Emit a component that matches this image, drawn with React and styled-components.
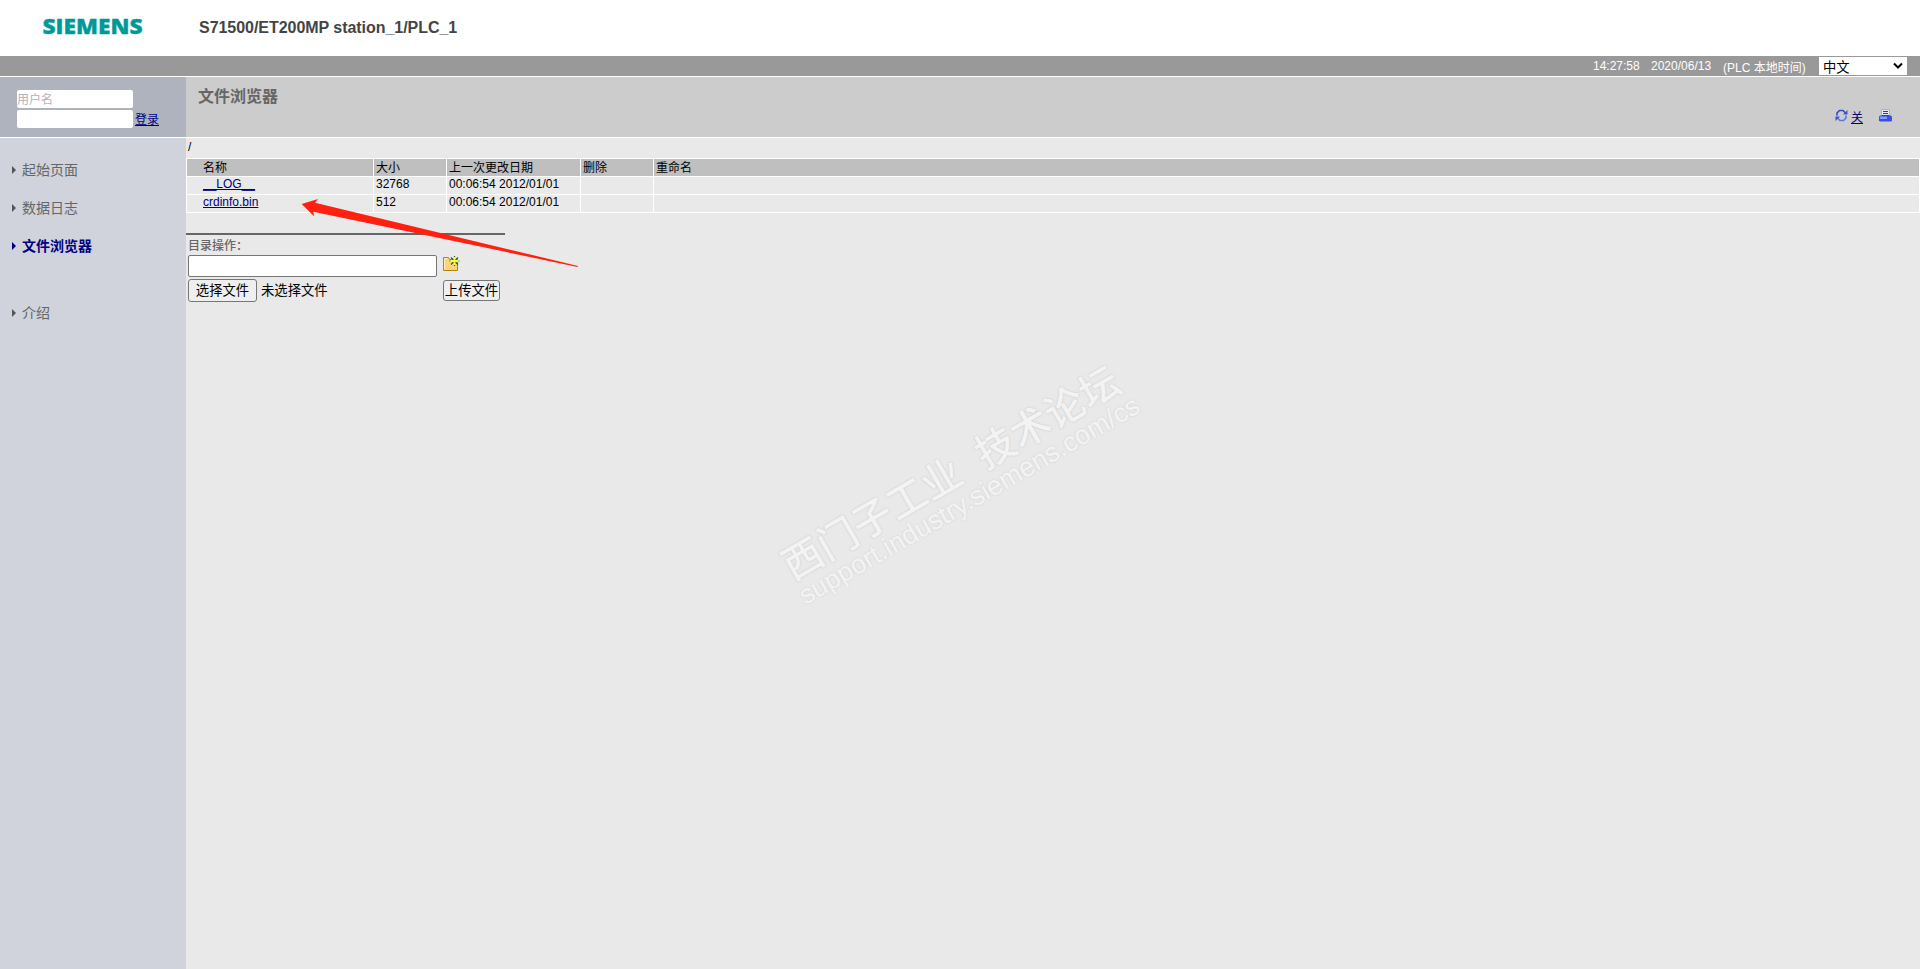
import styled, { createGlobalStyle } from "styled-components";

const GlobalStyle = createGlobalStyle`
  * {
    box-sizing: border-box;
  }

  body {
    margin: 0;
    background: #e9e9e9;
    color: #000;
    font-family: "Liberation Sans", "Noto Sans CJK SC", sans-serif;
    font-size: 12px;
    overflow: hidden;
  }
`;

const Page = styled.div`
  position: relative;
  height: 100vh;
  display: flex;
  flex-direction: column;
  overflow: hidden;
`;

const Header = styled.header`
  height: 56px;
  display: flex;
  background: #fff;
`;

const LogoBox = styled.div`
  width: 199px;
  padding: 10px 0 0 42px;

  svg {
    display: block;
  }
`;

const StationName = styled.h1`
  margin: 0;
  padding-top: 19px;
  font-size: 16px;
  letter-spacing: -0.04px;
  line-height: 18px;
  color: #444;
`;

const StatusBar = styled.div`
  height: 21px;
  display: flex;
  justify-content: flex-end;
  padding-right: 13px;
  background: #999;
  border-bottom: 1px solid #fff;
  color: #fff;
`;

const StatusText = styled.span`
  width: ${(props) => props.$width}px;
  padding-top: ${(props) => props.$top || 3}px;
  line-height: 14px;
  white-space: nowrap;
`;

const LanguageSelect = styled.button`
  width: 88px;
  height: 18px;
  margin-top: 1px;
  padding: 0 4px 0 4px;
  display: flex;
  align-items: center;
  justify-content: space-between;
  border: 0;
  background: #fff;
  color: #000;
  font: inherit;
  font-size: 13.33px;
  line-height: 18px;

  span {
    padding-top: 3px;
  }
`;

const Body = styled.div`
  flex: 1;
  display: flex;
`;

const Sidebar = styled.aside`
  width: 186px;
  background: #d0d3db;
`;

const LoginBox = styled.form`
  height: 61px;
  padding: 13px 0 0 17px;
  display: flex;
  flex-direction: column;
  gap: 2px;
  background: #afb3be;
  border-bottom: 1px solid #fff;
`;

const LoginRow = styled.div`
  display: flex;
  gap: 2px;
  height: 18px;
`;

const LoginInput = styled.input`
  width: 116px;
  height: 18px;
  padding: 1px 0 0;
  border: 0;
  border-radius: 2px;
  background: #fff;
  font: inherit;

  &::placeholder {
    color: #afb3be;
    opacity: 1;
  }
`;

const Link = styled.a`
  color: #000080;
  text-decoration: underline;
  text-underline-offset: 1px;
  text-decoration-skip-ink: none;
`;

const LoginLink = styled(Link)`
  line-height: 20px;
`;

const Menu = styled.nav`
  padding-top: 12px;
`;

const MenuItem = styled.a`
  height: 38px;
  margin-bottom: ${(props) => (props.$spaced ? 29 : 0)}px;
  padding-left: 12px;
  display: flex;
  align-items: center;
  gap: 6px;
  color: ${(props) => (props.$active ? "#000080" : "#666")};
  font-size: 14px;
  font-weight: ${(props) => (props.$active ? "bold" : "normal")};

  &::before {
    content: "";
    margin-top: 2px;
    border-left: 4px solid ${(props) => (props.$active ? "#000080" : "#555")};
    border-top: 4px solid transparent;
    border-bottom: 4px solid transparent;
  }
`;

const Main = styled.main`
  flex: 1;
`;

const TitleBar = styled.div`
  height: 61px;
  padding: 8px 28px 0 12px;
  display: flex;
  justify-content: space-between;
  background: #ccc;
  border-bottom: 1px solid #fff;
`;

const Title = styled.h2`
  margin: 0;
  color: #666;
  font-size: 16px;
  line-height: 24px;
`;

const Tools = styled.div`
  padding-top: 22px;
  display: flex;

  svg {
    margin-top: 2px;
  }
`;

const RefreshLink = styled(Link)`
  margin: 0 16px 0 3px;
  line-height: 23px;
`;

const Path = styled.div`
  height: 20px;
  padding-left: 2px;
  line-height: 19px;
`;

const FileTable = styled.div`
  border-left: 1px solid #fff;
  border-top: 1px solid #fff;
`;

const Row = styled.div`
  display: grid;
  grid-template-columns: 187px 73px 134px 73px 1fr;
  height: 18px;
  background: ${(props) => (props.$head ? "#bfbfbf" : "#e9e9e9")};
  line-height: ${(props) => (props.$head ? 19 : 15)}px;
`;

const Cell = styled.div`
  height: 18px;
  padding-left: ${(props) => (props.$first ? 16 : 2)}px;
  border-right: 1px solid #fff;
  border-bottom: 1px solid #fff;
  white-space: pre;
`;

const Operations = styled.section`
  width: 319px;
  margin-top: 20px;
  padding: 2px 5px 0 2px;
  border-top: 2px solid #666;
`;

const Label = styled.div`
  height: 18px;
  color: #666;
  font-weight: 500;
  line-height: 18px;
`;

const FormRow = styled.div`
  display: flex;
  align-items: ${(props) => (props.$center ? "center" : "flex-start")};
  justify-content: space-between;
  margin-top: ${(props) => (props.$center ? 2 : 0)}px;
`;

const DirectoryInput = styled.input`
  width: 249px;
  height: 22px;
  border: 1px solid #767676;
  border-radius: 2px;
  background: #fff;
`;

const FolderButton = styled.span`
  width: 57px;
`;

const Button = styled.button`
  width: ${(props) => props.$width}px;
  height: ${(props) => props.$height}px;
  padding: 1px 0 0;
  border: 1px solid #767676;
  border-radius: 3px;
  background: #efefef;
  color: #000;
  font: inherit;
  font-size: 13.33px;
  line-height: 18px;
  white-space: nowrap;
`;

const FilePicker = styled.div`
  display: flex;
  align-items: center;
  gap: 4px;
  font-size: 13.33px;
  line-height: 18px;
`;

const Watermark = styled.div`
  position: absolute;
  left: 763px;
  top: 438px;
  width: 430px;
  transform: rotate(-30deg);
  color: #f3f3f3;
  text-shadow: 0 0 2px #ccc, 0 0 2px #d8d8d8;
  white-space: pre;
  pointer-events: none;
`;

const WatermarkTitle = styled.div`
  font-size: 40px;
  font-weight: 500;
  line-height: 44px;
`;

const WatermarkUrl = styled.div`
  margin: -4px 0 0 -1px;
  font-size: 26.8px;
  line-height: 28px;
  -webkit-text-stroke: 0.4px #f3f3f3;
`;

const Arrow = styled.svg`
  position: absolute;
  left: 300px;
  top: 196px;
`;

const files = [
  { name: "__LOG__", size: "32768", date: "00:06:54 2012/01/01" },
  { name: "crdinfo.bin", size: "512", date: "00:06:54 2012/01/01" },
];

const menu = [
  { label: "起始页面" },
  { label: "数据日志" },
  { label: "文件浏览器", active: true, spaced: true },
  { label: "介绍" },
];

function Logo() {
  return (
    <svg width="110" height="36" role="img" aria-label="SIEMENS">
      <text
        x="0.5"
        y="24"
        textLength="100"
        lengthAdjust="spacingAndGlyphs"
        fill="#099"
        stroke="#099"
        strokeWidth="0.3"
        fontFamily="Open Sans"
        fontWeight="800"
        fontSize="21"
      >
        SIEMENS
      </text>
    </svg>
  );
}

function RefreshIcon() {
  return (
    <svg width="13" height="13" fill="none">
      <path d="M2 6.500V4L4.500 1.500H8L10.500 4" stroke="#3348c8" strokeWidth="1.600" />
      <path d="M11 6.500V9L8.500 11.500H5L2.500 9" stroke="#5878e8" strokeWidth="1.600" />
      <path d="M12.500 1v4.500H8zM.5 12V7.500H5z" fill="#3c50d4" />
    </svg>
  );
}

function PrinterIcon() {
  return (
    <svg width="13" height="13">
      <path d="M2.500.5h8v8h-8z" fill="#e4eafa" stroke="#a5b0dd" />
      <path d="M4 2.500h5M4 4.500h5" stroke="#334466" />
      <path d="M1 6.500h11l1 1v4l-1 1H1l-1-1v-4z" fill="#3c4ce6" />
      <path d="M1 7.500h7v2.500H1z" fill="#7c9cff" />
      <path d="M3 6.500h7" stroke="#334466" />
    </svg>
  );
}

function NewFolderIcon() {
  return (
    <svg width="17" height="17">
      <path d="M.5 2.500h5l1 2h8v11H.5z" fill="#fbd675" stroke="#b58119" />
      <path d="M1.500 14.500v-11h3" fill="none" stroke="#fff0bd" />
      <path d="M11.500 1v10M6.500 6h10M8 2.500l7 7M15 2.500l-7 7" stroke="#2c5545" strokeWidth="1.200" />
      <path d="M11.500 2v8M7.500 6h8" stroke="#ffff35" strokeWidth="1.800" />
    </svg>
  );
}

function App() {
  return (
    <Page>
      <GlobalStyle />
      <Header>
        <LogoBox>
          <Logo />
        </LogoBox>
        <StationName>S71500/ET200MP station_1/PLC_1</StationName>
      </Header>
      <StatusBar>
        <StatusText $width={58}>14:27:58</StatusText>
        <StatusText $width={72}>2020/06/13</StatusText>
        <StatusText $width={96} $top={5}>
          (PLC 本地时间)
        </StatusText>
        <LanguageSelect>
          <span>中文</span>
          <svg width="10" height="8" fill="none" stroke="#000" strokeWidth="2">
            <path d="M1 1.500l4 4 4-4" />
          </svg>
        </LanguageSelect>
      </StatusBar>
      <Body>
        <Sidebar>
          <LoginBox>
            <LoginInput placeholder="用户名" />
            <LoginRow>
              <LoginInput type="password" />
              <LoginLink>登录</LoginLink>
            </LoginRow>
          </LoginBox>
          <Menu>
            {menu.map((item) => (
              <MenuItem key={item.label} $active={item.active} $spaced={item.spaced}>
                {item.label}
              </MenuItem>
            ))}
          </Menu>
        </Sidebar>
        <Main>
          <TitleBar>
            <Title>文件浏览器</Title>
            <Tools>
              <RefreshIcon />
              <RefreshLink>关</RefreshLink>
              <PrinterIcon />
            </Tools>
          </TitleBar>
          <Path>/</Path>
          <FileTable>
            <Row $head>
              <Cell $first>名称</Cell>
              <Cell>大小</Cell>
              <Cell>上一次更改日期</Cell>
              <Cell>删除</Cell>
              <Cell>重命名</Cell>
            </Row>
            {files.map((file) => (
              <Row key={file.name}>
                <Cell $first>
                  <Link>{file.name}</Link>
                </Cell>
                <Cell>{file.size}</Cell>
                <Cell>{file.date}</Cell>
                <Cell />
                <Cell />
              </Row>
            ))}
          </FileTable>
          <Operations>
            <Label>目录操作：</Label>
            <FormRow>
              <DirectoryInput />
              <FolderButton>
                <NewFolderIcon />
              </FolderButton>
            </FormRow>
            <FormRow $center>
              <FilePicker>
                <Button $width={69} $height={23}>
                  选择文件
                </Button>
                未选择文件
              </FilePicker>
              <Button $width={57} $height={21}>
                上传文件
              </Button>
            </FormRow>
          </Operations>
        </Main>
      </Body>
      <Watermark>
        <WatermarkTitle>西门子工业  技术论坛</WatermarkTitle>
        <WatermarkUrl>support.industry.siemens.com/cs</WatermarkUrl>
      </Watermark>
      <Arrow width="280" height="74">
        <path d="M1.700 8L18 3l-3 3.700L278 70l-.5 1L13.300 15.700l1 4.800z" fill="#ff2010" />
      </Arrow>
    </Page>
  );
}

export default App;
